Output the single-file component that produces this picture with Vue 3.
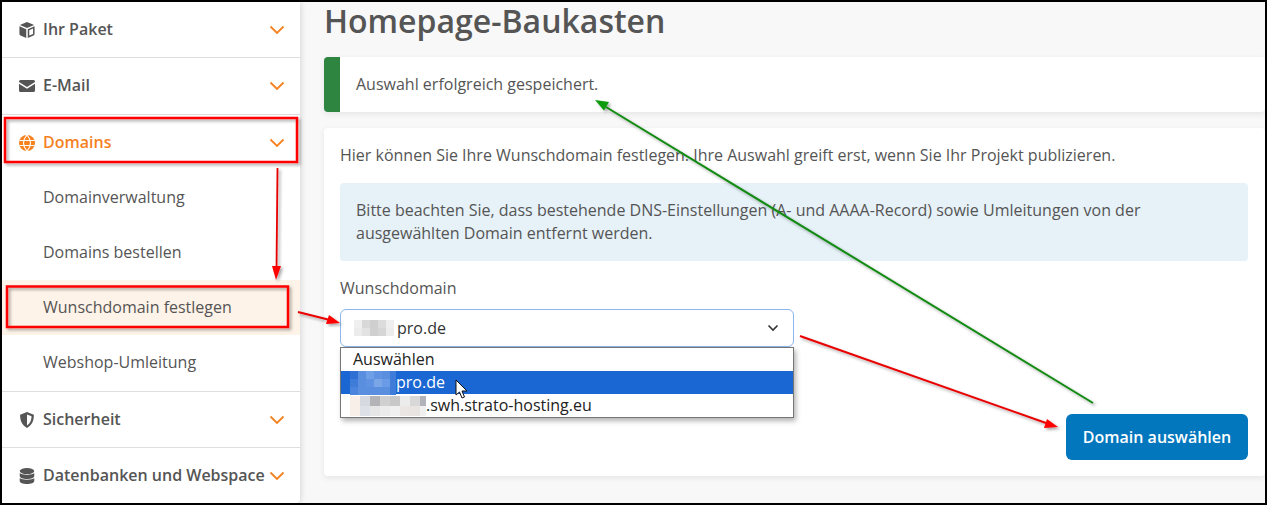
<script setup>
const collapsedTop = [
  { label: 'Ihr Paket', icon: 'box' },
  { label: 'E-Mail', icon: 'mail' }
]
const subItems = ['Domainverwaltung', 'Domains bestellen', 'Wunschdomain festlegen', 'Webshop-Umleitung']
const collapsedBottom = [
  { label: 'Sicherheit', icon: 'shield' },
  { label: 'Datenbanken und Webspace', icon: 'db' }
]
const cells = (size, rows) => rows.flatMap((row, y) => row.map((fill, x) => ({ x: x * size, y: y * size, fill })))
const blurShort = cells(8, [
  ['#f0f0f0', '#d8d8d8', '#cfcfcf', '#dcdcdc', '#eeeeee'],
  ['#ececec', '#e2e2e2', '#d0d0d0', '#d6d6d6', '#ececec']
])
const blurSel = cells(8, [
  ['#2f70d4', '#5a8fe0', '#6f9fe6', '#6094e2', '#5a8fe0', '#3f7bd8'],
  ['#3f7bd8', '#5a8fe0', '#5f93e2', '#7aa6e8', '#6a9be6', '#3f7bd8'],
  ['#4a84dc', '#5a8fe0', '#5a8fe0', '#5a8fe0', '#5a8fe0', '#3f7bd8']
])
const blurLong = cells(10, [
  ['#f8f0e8', '#d6dae0', '#b4b4b8', '#d0d0d0', '#c8c8c8', '#ececec', '#d8d8d8', '#b2b2ba'],
  ['#f8f0e8', '#dde0e6', '#e6e6e6', '#ececec', '#f0f0f0', '#ebe6e4', '#e8e4e2', '#f0f0f0']
])
</script>

<template>
  <div class="frame">
    <aside class="sidebar">
      <div v-for="item in collapsedTop" :key="item.label" class="nav-row">
        <svg v-if="item.icon === 'box'" class="nav-icon" viewBox="1 .6 14 14.8" aria-hidden="true">
          <path d="M8 .6 14.600 3.400 8 6.200 1.400 3.400Z" fill="#555" />
          <path d="M1 4.600 7.300 7.300V15.400L1.900 13.100A1.400 1.400 0 0 1 1 11.800Z" fill="#555" />
          <path d="M15 4.600 8.700 7.300V15.400L14.100 13.100A1.400 1.400 0 0 0 15 11.800ZM13.600 6.700V11.600L10.100 13.100V8.200Z" fill="#555" fill-rule="evenodd" />
        </svg>
        <svg v-else class="nav-icon" viewBox="0 0 16 16" aria-hidden="true">
          <path d="M1.500 2H14.500A1.500 1.500 0 0 1 16 3.500V4L8 9.100 0 4V3.500A1.500 1.500 0 0 1 1.500 2Z" fill="#555" />
          <path d="M0 5.700 8 10.800 16 5.700V12.500A1.500 1.500 0 0 1 14.500 14H1.500A1.500 1.500 0 0 1 0 12.500Z" fill="#555" />
        </svg>
        <span class="nav-label">{{ item.label }}</span>
        <svg class="chevron" viewBox="0 0 16 10" aria-hidden="true"><path d="M1.500 1.500 8 8 14.500 1.500" /></svg>
      </div>

      <div class="nav-row active">
        <svg class="nav-icon" viewBox="0 0 16 16" aria-hidden="true">
          <circle cx="8" cy="8" r="8" fill="#f5811f" />
          <path d="M.5 5.500H15.500M.5 10.500H15.500M8 0C3.600 5 3.600 11 8 16C12.400 11 12.400 5 8 0Z" fill="none" stroke="#fff" stroke-width="1.100" />
        </svg>
        <span class="nav-label">Domains</span>
        <svg class="chevron" viewBox="0 0 16 10" aria-hidden="true"><path d="M1.500 1.500 8 8 14.500 1.500" /></svg>
      </div>

      <div class="sub-list">
        <div v-for="s in subItems" :key="s" class="sub-row" :class="{ current: s === 'Wunschdomain festlegen' }"><span class="sub-text">{{ s }}</span></div>
      </div>

      <div v-for="item in collapsedBottom" :key="item.label" class="nav-row lower">
        <svg v-if="item.icon === 'shield'" class="nav-icon" viewBox="1.400 .3 13.200 15.400" aria-hidden="true">
          <path d="M8 .3 14.600 3C14.800 8.400 12.800 13.200 8 15.700 3.200 13.200 1.200 8.400 1.400 3ZM8 2.700V13.300C11 11.500 12.300 8.400 12.400 4.500Z" fill="#555" fill-rule="evenodd" />
        </svg>
        <svg v-else class="nav-icon" viewBox="1 .3 14 15.400" aria-hidden="true">
          <ellipse cx="8" cy="3.200" rx="7" ry="2.900" fill="#555" />
          <path d="M1 5.200C2.500 7.400 13.500 7.400 15 5.200V8C15 9.600 11.900 10.900 8 10.900S1 9.600 1 8Z" fill="#555" />
          <path d="M1 10C2.500 12.200 13.500 12.200 15 10V12.800C15 14.400 11.900 15.700 8 15.700S1 14.400 1 12.800Z" fill="#555" />
        </svg>
        <span class="nav-label">{{ item.label }}</span>
        <svg class="chevron" viewBox="0 0 16 10" aria-hidden="true"><path d="M1.500 1.500 8 8 14.500 1.500" /></svg>
      </div>
    </aside>

    <main class="content">
      <h1 class="title">Homepage-Baukasten</h1>

      <div class="alert"><span class="alert-text">Auswahl erfolgreich gespeichert.</span></div>

      <section class="card">
        <p class="intro">Hier können Sie Ihre Wunschdomain festlegen. Ihre Auswahl greift erst, wenn Sie Ihr Projekt publizieren.</p>
        <div class="info">Bitte beachten Sie, dass bestehende DNS-Einstellungen (A- und AAAA-Record) sowie Umleitungen von der ausgewählten Domain entfernt werden.</div>
        <div class="field-label">Wunschdomain</div>
        <div class="select-wrap">
          <div class="select">
            <svg class="blur blur-short" width="40" height="16" aria-hidden="true">
              <rect v-for="(r, i) in blurShort" :key="i" :x="r.x" :y="r.y" width="8" height="8" :fill="r.fill" />
            </svg>
            <span>pro.de</span>
            <svg class="select-caret" viewBox="0 0 12 8" aria-hidden="true"><path d="M1.500 1.500 6 6 10.500 1.500" /></svg>
          </div>
          <div class="dropdown">
            <div class="option">Auswählen</div>
            <div class="option selected">
              <svg class="blur blur-sel" width="46" height="24" aria-hidden="true">
                <rect v-for="(r, i) in blurSel" :key="i" :x="r.x" :y="r.y" width="8" height="8" :fill="r.fill" />
              </svg>
              <span>pro.de</span>
            </div>
            <div class="option">
              <svg class="blur blur-long" width="76" height="20" aria-hidden="true">
                <rect v-for="(r, i) in blurLong" :key="i" :x="r.x" :y="r.y" width="10" height="10" :fill="r.fill" />
              </svg>
              <span>.swh.strato-hosting.eu</span>
            </div>
          </div>
        </div>
        <div class="actions">
          <button class="primary" type="button">Domain auswählen</button>
        </div>
      </section>
    </main>

    <svg class="annotations" width="1267" height="505" viewBox="0 0 1267 505" aria-hidden="true">
      <defs>
        <filter id="sh" x="-10%" y="-10%" width="125%" height="125%">
          <feDropShadow dx="2" dy="2" stdDeviation="1.500" flood-color="#000" flood-opacity="0.35" />
        </filter>
      </defs>
      <g filter="url(#sh)">
        <rect x="5" y="118" width="292" height="44" fill="none" stroke="#f00" stroke-width="2.500" />
        <rect x="7" y="286.500" width="281" height="40.500" fill="none" stroke="#f00" stroke-width="2.500" />
        <path d="M277.500 168 276.500 270" stroke="#e80000" stroke-width="1.800" fill="none" />
        <path d="M276 280 272 266 281 266Z" fill="#f00" />
        <path d="M298 312 330 320" stroke="#e80000" stroke-width="2" fill="none" />
        <path d="M340 323 326 324 329 315Z" fill="#f00" />
        <path d="M800 336 1046 423" stroke="#e80000" stroke-width="2" fill="none" />
        <path d="M1058 427 1044 428 1047 419Z" fill="#f00" />
        <path d="M1093 403 606 107" stroke="#128a12" stroke-width="2" fill="none" />
        <path d="M595 100 609 102 604 110.500Z" fill="#0a9a0a" />
      </g>
      <path d="M456 380V395L459.500 392 462 398 464.500 397 462 391H467Z" fill="#fff" stroke="#111" stroke-width="1" stroke-linejoin="round" />
    </svg>
  </div>
</template>

<style>
html, body { margin: 0; padding: 0; background: #000; }
</style>

<style scoped>
.frame {
  position: relative;
  box-sizing: border-box;
  width: 1267px;
  height: 505px;
  overflow: hidden;
  display: flex;
  border: 2px solid #000;
  background: #f8f8f8;
  font-family: "Open Sans", "Noto Sans", sans-serif;
  font-size: 16px;
  color: #555;
}
.sidebar {
  flex: none;
  width: 298px;
  height: 501px;
  background: #fff;
  border-bottom-right-radius: 4px;
  box-shadow: 1px 0 6px rgba(0, 0, 0, 0.14);
}
.nav-row {
  display: flex;
  align-items: center;
  box-sizing: border-box;
  height: 56px;
  padding: 0 15px 0 17px;
  border-bottom: 1px solid #dedede;
}
.nav-row:nth-child(2) { height: 57px; }
.nav-row.active { height: 55px; border-bottom: 0; color: #f5811f; }
.nav-row.lower:last-child { border-bottom: 0; }
.nav-icon { flex: none; width: 16px; height: 16px; margin-right: 8px; }
.nav-label { flex: 1; padding-bottom: 2px; font-weight: 600; white-space: nowrap; }
.chevron {
  flex: none;
  width: 16px;
  height: 10px;
  fill: none;
  stroke: #f5811f;
  stroke-width: 1.800;
}
.sub-list { border-bottom: 1px solid #dedede; padding-bottom: 1px; }
.sub-row {
  display: flex;
  align-items: center;
  height: 55px;
  padding-left: 41px;
}
.sub-text { padding-bottom: 2px; }
.sub-row.current { background: #fef3e8; }
.content {
  flex: 1;
  min-width: 0;
  padding: 0 0 0 24px;
}
.title {
  margin: 0 0 17px;
  height: 38px;
  font-size: 32px;
  line-height: 38px;
  font-weight: 600;
  color: #555;
  white-space: nowrap;
}
.alert {
  box-sizing: border-box;
  height: 55px;
  display: flex;
  align-items: center;
  padding-left: 16px;
  border-left: 16px solid #2e8540;
  border-radius: 4px;
  background: #fff;
  box-shadow: 0 2px 6px rgba(0, 0, 0, 0.08);
}
.alert-text { padding-bottom: 2px; }
.card {
  box-sizing: border-box;
  height: 348px;
  margin-top: 16px;
  padding: 16px 17px 0 16px;
  border-radius: 4px;
  background: #fff;
  box-shadow: 0 2px 6px rgba(0, 0, 0, 0.08);
}
.intro { margin: 0; height: 22px; line-height: 22px; white-space: nowrap; }
.info {
  box-sizing: border-box;
  height: 78px;
  margin-top: 17px;
  padding: 16px 16px 0;
  border-radius: 4px;
  background: #e6f1f8;
  line-height: 23px;
}
.field-label { margin-top: 16px; height: 22px; line-height: 22px; }
.select-wrap { position: relative; width: 454px; margin-top: 10px; }
.select {
  box-sizing: border-box;
  height: 38px;
  display: flex;
  align-items: center;
  padding-left: 13px;
  border: 1px solid #8db6ee;
  border-radius: 6px;
  color: #333;
  background: #fff;
}
.blur { flex: none; display: block; }
.blur-short { margin-right: 3px; }
.select-caret {
  width: 12px;
  height: 8px;
  margin-left: auto;
  margin-right: 14px;
  fill: none;
  stroke: #333;
  stroke-width: 1.600;
}
.dropdown {
  position: absolute;
  left: 0;
  top: 38px;
  box-sizing: border-box;
  width: 454px;
  height: 71px;
  border: 1px solid #767676;
  background: #fff;
  color: #222;
  box-shadow: 2px 3px 5px rgba(0, 0, 0, 0.3);
  z-index: 2;
}
.option {
  display: flex;
  align-items: center;
  height: 23px;
  padding-left: 12px;
  line-height: 23px;
  white-space: nowrap;
}
.option.selected { background: #1a66d2; color: #fff; padding-left: 0; }
.blur-sel { margin-left: 9px; }
.blur-long { margin-left: -3px; }
.actions { display: flex; justify-content: flex-end; margin-top: 67px; }
.primary {
  box-sizing: border-box;
  width: 182px;
  height: 46px;
  padding: 0;
  border: 0;
  border-radius: 6px;
  background: #0277bd;
  color: #fff;
  font: 600 16px "Open Sans", "Noto Sans", sans-serif;
}
.annotations { position: absolute; left: -2px; top: -2px; pointer-events: none; z-index: 5; }
</style>
